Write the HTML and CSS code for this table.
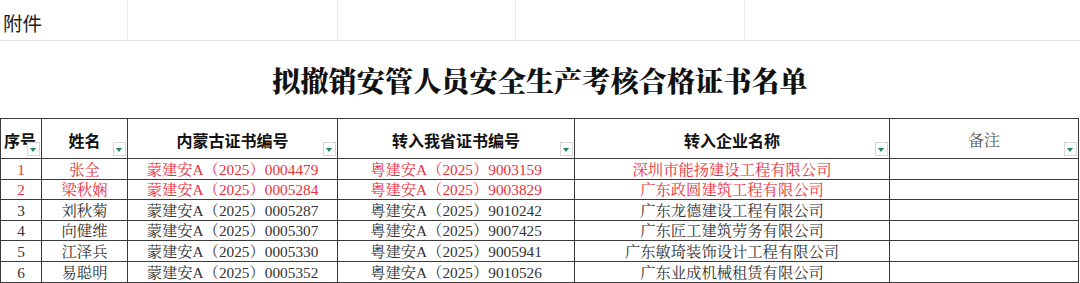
FILE: index.html
```html
<!DOCTYPE html>
<html lang="zh">
<head>
<meta charset="utf-8">
<link rel="stylesheet" href="styles.css">
</head>
<body>
<div class="sheet">
  <div class="top-row">
    <div class="top-cell c1">附件</div>
    <div class="top-cell c2"></div>
    <div class="top-cell c3"></div>
    <div class="top-cell c4"></div>
    <div class="top-cell c5"></div>
  </div>
  <div class="title-row"><h1 class="title">拟撤销安管人员安全生产考核合格证书名单</h1></div>
  <table class="grid">
    <colgroup>
      <col class="w-no"><col class="w-name"><col class="w-cert"><col class="w-new"><col class="w-co"><col class="w-note">
    </colgroup>
    <thead>
      <tr class="head">
        <th class="h-no">序号<span class="filter"></span></th>
        <th>姓名<span class="filter"></span></th>
        <th>内蒙古证书编号<span class="filter"></span></th>
        <th>转入我省证书编号<span class="filter"></span></th>
        <th>转入企业名称<span class="filter"></span></th>
        <th class="h-note">备注<span class="filter"></span></th>
      </tr>
    </thead>
    <tbody>
      <tr class="r-a red"><td>1</td><td>张全</td><td>蒙建安A（2025）0004479</td><td>粤建安A（2025）9003159</td><td>深圳市能扬建设工程有限公司</td><td></td></tr>
      <tr class="r-b red"><td>2</td><td>梁秋娴</td><td>蒙建安A（2025）0005284</td><td>粤建安A（2025）9003829</td><td>广东政圆建筑工程有限公司</td><td></td></tr>
      <tr class="r-a"><td>3</td><td>刘秋菊</td><td>蒙建安A（2025）0005287</td><td>粤建安A（2025）9010242</td><td>广东龙德建设工程有限公司</td><td></td></tr>
      <tr class="r-b"><td>4</td><td>向健维</td><td>蒙建安A（2025）0005307</td><td>粤建安A（2025）9007425</td><td>广东匠工建筑劳务有限公司</td><td></td></tr>
      <tr class="r-a"><td>5</td><td>江泽兵</td><td>蒙建安A（2025）0005330</td><td>粤建安A（2025）9005941</td><td>广东敏琦装饰设计工程有限公司</td><td></td></tr>
      <tr class="r-a"><td>6</td><td>易聪明</td><td>蒙建安A（2025）0005352</td><td>粤建安A（2025）9010526</td><td>广东业成机械租赁有限公司</td><td></td></tr>
    </tbody>
  </table>
</div>
</body>
</html>
```
FILE: styles.css
```css
html, body {
  margin: 0;
  padding: 0;
  background: #ffffff;
}
.sheet {
  width: 1080px;
  height: 283px;
  overflow: hidden;
  font-family: "Noto Serif CJK SC", "Noto Sans CJK SC", serif;
  color: #333;
}
.top-row {
  display: flex;
  height: 41px;
  border-bottom: 1px solid #e2e2e2;
  box-sizing: border-box;
}
.top-cell {
  box-sizing: border-box;
  border-right: 1px solid #ececec;
  height: 40px;
}
.top-cell.c1 { width: 128px; font-family: "Noto Sans CJK SC", sans-serif; font-size: 19.5px; color: #1a1a1a; line-height: 46px; padding-left: 3px; }
.top-cell.c2 { width: 210px; }
.top-cell.c3 { width: 178px; }
.top-cell.c4 { width: 229px; }
.top-cell.c5 { flex: 1; border-right: none; }
.title-row {
  height: 77px;
  display: flex;
  align-items: center;
  justify-content: center;
}
.title {
  margin: 0;
  font-family: "Noto Serif CJK SC", "Noto Sans CJK SC", serif;
  font-weight: 900;
  font-size: 28.2px;
  color: #111;
  letter-spacing: 0;
  line-height: 1;
  padding-top: 2px;
}
.grid {
  border-collapse: collapse;
  table-layout: fixed;
  width: 1078px;
}
.w-no { width: 41px; }
.w-name { width: 86px; }
.w-cert { width: 210px; }
.w-new { width: 237px; }
.w-co { width: 315px; }
.w-note { width: 189px; }
.grid th, .grid td {
  border: 1px solid #3a3a3a;
  padding: 0;
  text-align: center;
  white-space: nowrap;
  overflow: hidden;
}
.head th {
  position: relative;
  height: 40px;
  vertical-align: top;
  padding-top: 12px;
  box-sizing: border-box;
  font-family: "Noto Sans CJK SC", sans-serif;
  font-weight: 700;
  font-size: 16px;
  line-height: 18px;
  color: #111;
}
.head th.h-no { text-align: left; padding-left: 3px; overflow: visible; }
.head th.h-note { font-family: "Noto Serif CJK SC", "Noto Sans CJK SC", serif; font-weight: 400; color: #555; }
.filter {
  position: absolute;
  right: 1px;
  bottom: 2px;
  width: 11px;
  height: 12px;
  border: 1px solid #d6d6d6;
  background: #fff;
  box-sizing: content-box;
}
.filter::after {
  content: "";
  position: absolute;
  left: 2px;
  top: 5px;
  border-left: 3.5px solid transparent;
  border-right: 3.5px solid transparent;
  border-top: 4px solid #1e8a5a;
}
.grid td {
  font-family: "Liberation Serif", "Noto Serif CJK SC", "Noto Sans CJK SC", serif;
  font-size: 15.3px;
  line-height: 19px;
  color: #333;
  vertical-align: middle;
}
.r-a td { height: 20px; }
.r-b td { height: 19px; }
.red td { color: #e8323e; }
```
